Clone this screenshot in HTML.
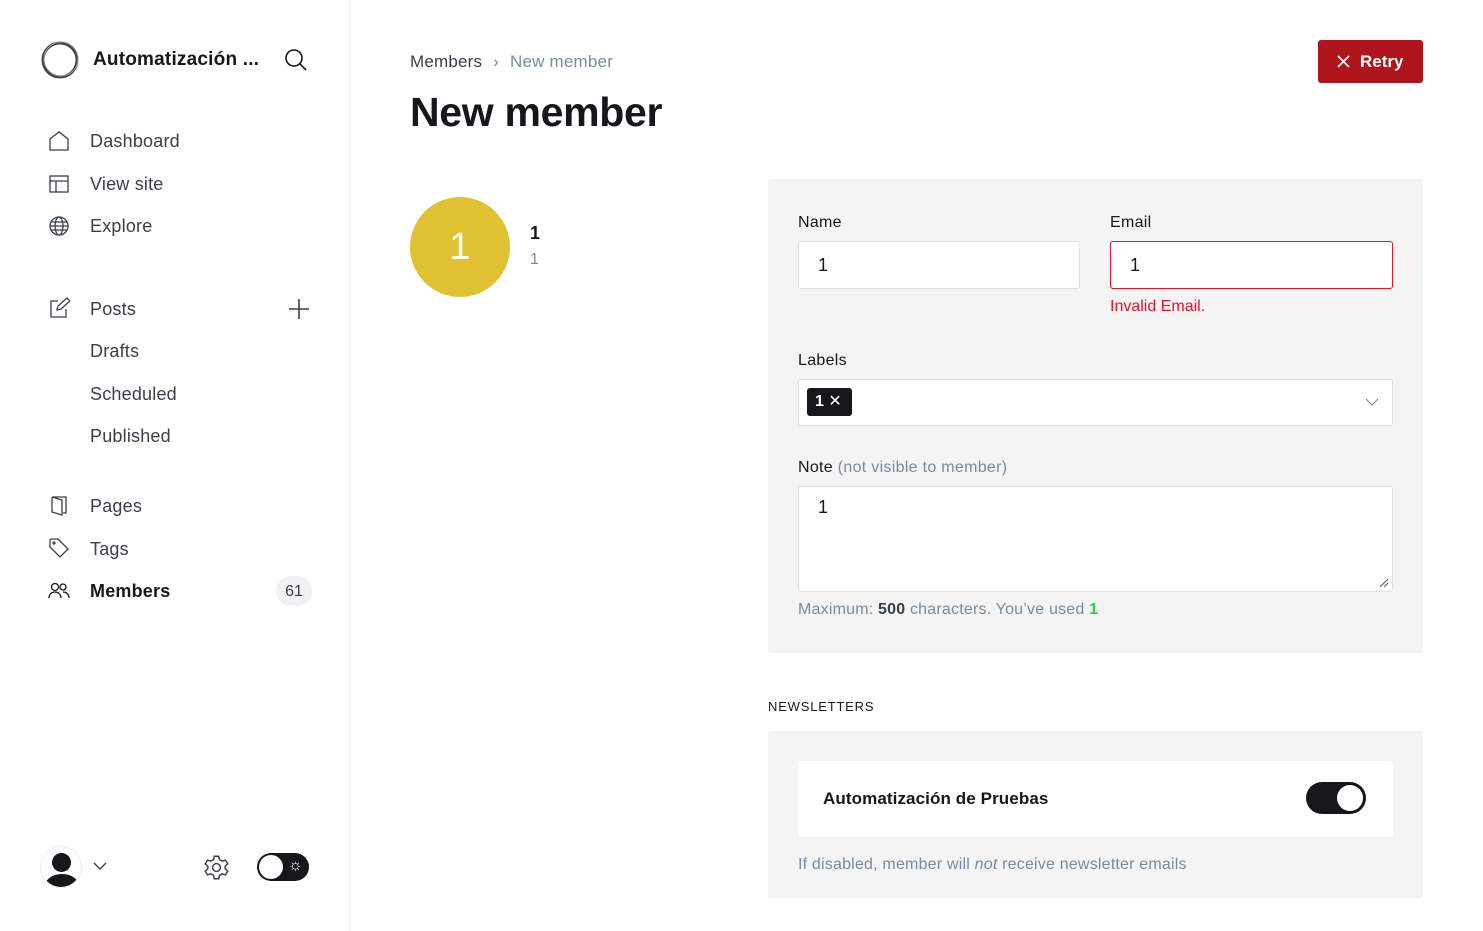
<!DOCTYPE html>
<html><head><meta charset="utf-8"><style>
*{box-sizing:border-box;margin:0;padding:0}
body{width:1483px;height:931px;font-family:"Liberation Sans",sans-serif;background:#fff;color:#15171a;position:relative;overflow:hidden}
.side{position:absolute;left:0;top:0;width:350px;height:931px;border-right:1px solid #ebeef0}
.a{position:absolute}
.nav{position:absolute;left:90px;font-size:18px;color:#394047;letter-spacing:0.2px}
.ic{position:absolute;left:48px}
.lbl{font-size:16px;color:#15171a;position:absolute;letter-spacing:0.3px}
.inp{position:absolute;background:#fff;border:1px solid #dde1e5;border-radius:3px;font-size:18px;padding-left:19px}
</style></head><body>
<div class="side">
 <svg class="a" style="left:40px;top:40px" width="40" height="40" viewBox="0 0 40 40"><circle cx="20" cy="20" r="17" fill="none" stroke="#444" stroke-width="3"/><circle cx="21" cy="19" r="17" fill="none" stroke="#999" stroke-width="1"/></svg>
 <div class="a" style="left:93px;top:49px;font-size:19px;font-weight:bold;letter-spacing:0.2px">Automatización ...</div>
 <svg class="a" style="left:284px;top:48px" width="24" height="24" viewBox="0 0 24 24" fill="none" stroke="#15171a" stroke-width="1.6"><circle cx="10" cy="10" r="8"/><path d="M16 16l6 6"/></svg>
 <svg class="ic" style="top:130px" width="22" height="22" viewBox="0 0 22 22" fill="none" stroke="#394047" stroke-width="1.3"><path d="M2 9L11 2l9 7v11H2z"/></svg>
 <div class="nav" style="top:131px">Dashboard</div>
 <svg class="ic" style="top:173px" width="22" height="22" viewBox="0 0 22 22" fill="none" stroke="#394047" stroke-width="1.3"><rect x="2" y="3" width="18" height="16"/><path d="M2 8h18M8 8v11"/></svg>
 <div class="nav" style="top:174px">View site</div>
 <svg class="ic" style="top:215px" width="22" height="22" viewBox="0 0 22 22" fill="none" stroke="#394047" stroke-width="1.3"><circle cx="11" cy="11" r="9"/><ellipse cx="11" cy="11" rx="4" ry="9"/><path d="M2 11h18M3 7h16M3 15h16"/></svg>
 <div class="nav" style="top:216px">Explore</div>
 <svg class="ic" style="top:297px" width="22" height="22" viewBox="0 0 22 22" fill="none" stroke="#394047" stroke-width="1.3"><path d="M10 4H3v16h15v-8M9 13l1-4 9-8 3 3-9 8z"/></svg>
 <div class="nav" style="top:299px">Posts</div>
 <svg class="a" style="left:288px;top:298px" width="22" height="22" viewBox="0 0 22 22" stroke="#394047" stroke-width="1.6"><path d="M11 1v20M1 11h20"/></svg>
 <div class="nav" style="top:341px">Drafts</div>
 <div class="nav" style="top:384px">Scheduled</div>
 <div class="nav" style="top:426px">Published</div>
 <svg class="ic" style="top:494px" width="22" height="22" viewBox="0 0 22 22" fill="none" stroke="#394047" stroke-width="1.3"><path d="M4 3h14v16h-3M4 3v15l10 3V6L4 3"/></svg>
 <div class="nav" style="top:496px">Pages</div>
 <svg class="ic" style="top:537px" width="22" height="22" viewBox="0 0 22 22" fill="none" stroke="#394047" stroke-width="1.3"><path d="M2 3v7l10 10 8-8L10 2H3z"/><circle cx="6" cy="6" r="1"/></svg>
 <div class="nav" style="top:539px">Tags</div>
 <svg class="ic" style="top:580px" width="22" height="22" viewBox="0 0 22 22" fill="none" stroke="#15171a" stroke-width="1.3"><circle cx="7" cy="7" r="3.5"/><path d="M1 18c0-4 3-6 6-6s6 2 6 6"/><circle cx="15" cy="7" r="3"/><path d="M15 12c3 0 6 2 6 6"/></svg>
 <div class="nav" style="top:581px;font-weight:bold;color:#15171a">Members</div>
 <div class="a" style="left:276px;top:576px;width:36px;height:30px;border-radius:15px;background:#eff1f3;font-size:16px;color:#394047;text-align:center;line-height:31px">61</div>
 <div class="a" style="left:40px;top:846px;width:42px;height:42px;border-radius:50%;border:1px solid #eee;overflow:hidden"><div class="a" style="left:11px;top:6px;width:19px;height:19px;border-radius:50%;background:#15171a"></div><div class="a" style="left:4px;top:27px;width:34px;height:24px;border-radius:50%;background:#15171a"></div></div>
 <svg class="a" style="left:93px;top:861px" width="14" height="10" viewBox="0 0 14 10" fill="none" stroke="#394047" stroke-width="1.4"><path d="M1 2l6 6 6-6"/></svg>
 <svg class="a" style="left:203px;top:854px" width="27" height="27" viewBox="0 0 24 24" fill="none" stroke="#394047" stroke-width="1.3"><circle cx="12" cy="12" r="3.5"/><path d="M10 2h4l.6 3 2.5 1.4 2.9-1 2 3.4-2.3 2v2.4l2.3 2-2 3.4-2.9-1-2.5 1.4-.6 3h-4l-.6-3-2.5-1.4-2.9 1-2-3.4 2.3-2v-2.4l-2.3-2 2-3.4 2.9 1L9.4 5z"/></svg>
 <div class="a" style="left:257px;top:853px;width:52px;height:28px;border-radius:14px;background:#15171a"><div class="a" style="left:2px;top:2px;width:24px;height:24px;border-radius:50%;background:#fff"></div><div class="a" style="left:31px;top:4px;color:#fff;font-size:16px">☼</div></div>
</div>

<div class="a" style="left:410px;top:52px;font-size:17px;color:#394047;letter-spacing:0.2px">Members <span style="color:#7c8b9a;margin:0 6px">›</span> <span style="color:#7c8b9a">New member</span></div>
<div class="a" style="left:410px;top:89px;font-size:41px;font-weight:bold;letter-spacing:-0.3px">New member</div>
<div class="a" style="left:1318px;top:40px;width:105px;height:43px;background:#b0141c;border-radius:3px;color:#fff;font-size:17px;font-weight:bold;line-height:44px;padding-left:42px">Retry</div>
<svg class="a" style="left:1337px;top:55px" width="13" height="13" stroke="#fff" stroke-width="1.6"><path d="M1 1l11 11M12 1L1 12"/></svg>

<div class="a" style="left:410px;top:197px;width:100px;height:100px;border-radius:50%;background:#e0c232;color:#fff;font-size:38px;text-align:center;line-height:100px">1</div>
<div class="a" style="left:530px;top:223px;font-size:18px;font-weight:bold">1</div>
<div class="a" style="left:530px;top:251px;font-size:16px;color:#7c8b9a">1</div>

<div class="a" style="left:768px;top:179px;width:655px;height:474px;background:#f3f4f3;border-radius:3px">
 <div class="lbl" style="left:30px;top:35px">Name</div>
 <div class="inp" style="left:30px;top:62px;width:282px;height:48px;line-height:46px">1</div>
 <div class="lbl" style="left:342px;top:35px">Email</div>
 <div class="inp" style="left:342px;top:62px;width:283px;height:48px;line-height:46px;border-color:#f50b23">1</div>
 <div class="a" style="left:342px;top:119px;font-size:16px;color:#f50b23">Invalid Email.</div>
 <div class="lbl" style="left:30px;top:173px">Labels</div>
 <div class="inp" style="left:30px;top:200px;width:595px;height:47px;padding:0">
  <div class="a" style="left:8px;top:8px;width:45px;height:28px;background:#15171a;border-radius:3px;color:#fff;font-size:16px;font-weight:bold;line-height:28px;padding-left:8px">1 <span style="font-weight:normal">✕</span></div>
  <svg class="a" style="left:566px;top:18px" width="14" height="9" fill="none" stroke="#7c8b9a" stroke-width="1.2"><path d="M1 1l6 6 6-6"/></svg>
 </div>
 <div class="lbl" style="left:30px;top:280px">Note <span style="color:#7c8b9a">(not visible to member)</span></div>
 <div class="inp" style="left:30px;top:307px;width:595px;height:106px;padding-top:10px">1
  <svg class="a" style="left:580px;top:91px" width="10" height="10" stroke="#555" stroke-width="1"><path d="M9 1L1 9M9 5L5 9"/></svg>
 </div>
 <div class="a" style="left:30px;top:422px;font-size:16px;color:#7c8b9a;letter-spacing:0.2px">Maximum: <b style="color:#394047">500</b> characters. You’ve used <b style="color:#30cf43">1</b></div>
</div>

<div class="a" style="left:768px;top:699px;font-size:13px;letter-spacing:0.8px;color:#15171a">NEWSLETTERS</div>
<div class="a" style="left:768px;top:731px;width:655px;height:167px;background:#f3f4f3;border-radius:3px">
 <div class="a" style="left:30px;top:30px;width:595px;height:76px;background:#fff;border-radius:3px">
  <div class="a" style="left:25px;top:28px;font-size:17px;font-weight:bold;letter-spacing:0.1px">Automatización de Pruebas</div>
  <div class="a" style="left:508px;top:21px;width:60px;height:32px;border-radius:16px;background:#15171a"><div class="a" style="left:31px;top:3px;width:26px;height:26px;border-radius:50%;background:#fff"></div></div>
 </div>
 <div class="a" style="left:30px;top:125px;font-size:16px;color:#7c8b9a;letter-spacing:0.2px">If disabled, member will <i>not</i> receive newsletter emails</div>
</div>
</body></html>
